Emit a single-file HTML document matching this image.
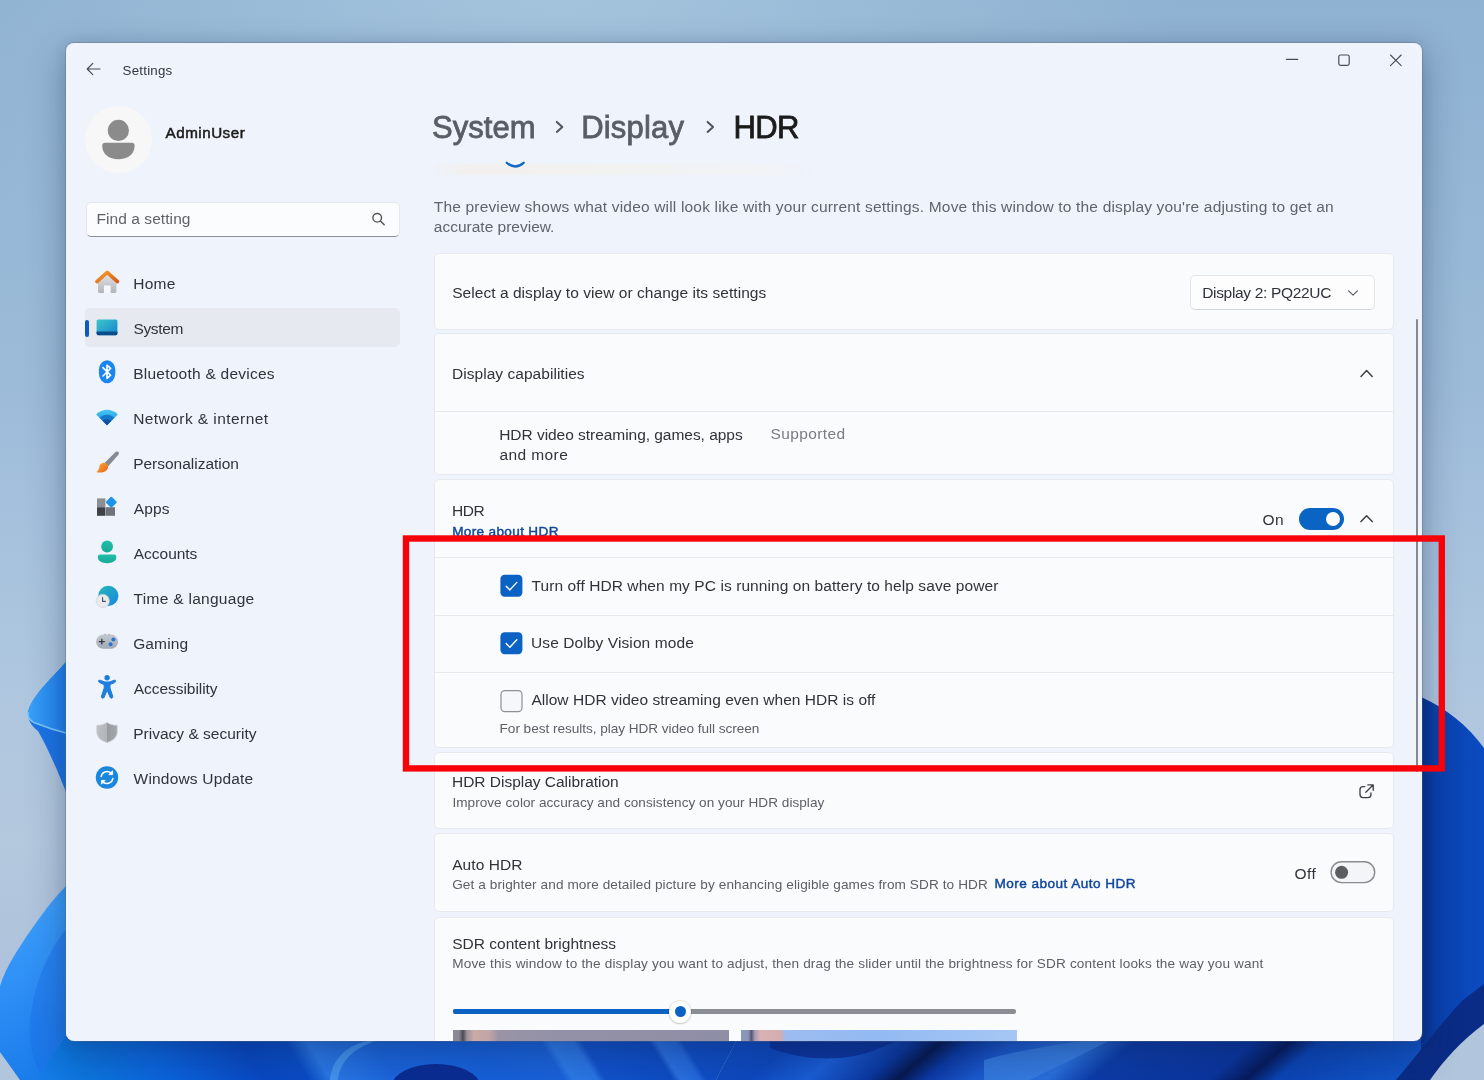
<!DOCTYPE html>
<html lang="en">
<head>
<meta charset="utf-8">
<title>Settings - HDR</title>
<style>
*{box-sizing:border-box;margin:0;padding:0}
html,body{width:1484px;height:1080px;overflow:hidden;background:#9dbbd8}
body{font-family:"Liberation Sans",sans-serif;color:#1b1b1b;position:relative}
.abs{position:absolute}
#wall{position:absolute;left:0;top:0;width:1484px;height:1080px}
#win{position:absolute;left:66px;top:43px;width:1356px;height:998px;background:#eff3fb;border-radius:8px;overflow:hidden}
#in{will-change:transform;position:absolute;left:-66px;top:-43px;width:1484px;height:1080px}
#shadow{position:absolute;left:66px;top:43px;width:1356px;height:998px;border-radius:8px;
 box-shadow:0 0 0 1px rgba(95,105,120,.36),0 14px 34px 6px rgba(15,35,75,.26),0 0 14px rgba(15,35,75,.12)}
.t{position:absolute;white-space:nowrap;font-size:15.5px;line-height:20px;color:#2b2e35}
.card{position:absolute;left:434px;width:960px;background:#fafbfd;border:1px solid #e7e9ee;border-radius:5px}
.hl{position:absolute;left:435px;width:958px;height:1px;background:#e7e9ee}
</style>
</head>
<body>
<svg id="wall" width="1484" height="1080" viewBox="0 0 1484 1080">
<defs>
 <linearGradient id="skyv" x1="0" y1="0" x2="0" y2="1">
  <stop offset="0" stop-color="#8fb2d2"/><stop offset=".35" stop-color="#9cbbd9"/><stop offset=".6" stop-color="#adc6df"/><stop offset=".78" stop-color="#b4c8de"/><stop offset="1" stop-color="#a9bfd9"/>
 </linearGradient>
 <radialGradient id="skyglow" cx="560" cy="-40" r="620" gradientUnits="userSpaceOnUse">
  <stop offset="0" stop-color="#a7c6de" stop-opacity=".9"/><stop offset="1" stop-color="#a7c6de" stop-opacity="0"/>
 </radialGradient>
 <linearGradient id="bot" x1="0" y1="0" x2="1484" y2="0" gradientUnits="userSpaceOnUse">
  <stop offset="0" stop-color="#1e80ee"/><stop offset=".05" stop-color="#0c76de"/><stop offset=".11" stop-color="#0b62dc"/><stop offset=".17" stop-color="#0848c2"/><stop offset=".2" stop-color="#0a4cc6"/>
  <stop offset=".215" stop-color="#2a78e6"/><stop offset=".235" stop-color="#2470e2"/><stop offset=".26" stop-color="#1a64dc"/><stop offset=".33" stop-color="#1660da"/><stop offset=".372" stop-color="#1a62da"/>
  <stop offset=".378" stop-color="#2c7ae8"/><stop offset=".394" stop-color="#2a74e4"/><stop offset=".4" stop-color="#1152cc"/><stop offset=".445" stop-color="#0e4cc4"/><stop offset=".45" stop-color="#2a70e0"/><stop offset=".463" stop-color="#2468dc"/>
  <stop offset=".468" stop-color="#0f4ec6"/><stop offset=".52" stop-color="#0d48be"/><stop offset=".56" stop-color="#1a5ed6"/><stop offset=".6" stop-color="#0b379f"/><stop offset=".62" stop-color="#06184f"/><stop offset=".64" stop-color="#0c3aa6"/>
  <stop offset=".67" stop-color="#1a58cc"/><stop offset=".72" stop-color="#2a70dc"/><stop offset=".75" stop-color="#0c3ca8"/><stop offset=".83" stop-color="#0a359e"/><stop offset=".855" stop-color="#061a5c"/><stop offset=".875" stop-color="#0b44b4"/><stop offset=".93" stop-color="#0f4fc2"/><stop offset=".97" stop-color="#1256c8"/><stop offset="1" stop-color="#0d4abc"/>
 </linearGradient>
 <linearGradient id="rp" x1="1421" y1="0" x2="1484" y2="0" gradientUnits="userSpaceOnUse">
  <stop offset="0" stop-color="#07328f"/><stop offset=".25" stop-color="#0a40ac"/><stop offset="1" stop-color="#0b4cc2"/>
 </linearGradient>
 <linearGradient id="lp2" x1="0" y1="930" x2="60" y2="1080" gradientUnits="userSpaceOnUse">
  <stop offset="0" stop-color="#3a9cfa"/><stop offset=".5" stop-color="#2a8af4"/><stop offset="1" stop-color="#177ae8"/>
 </linearGradient>
 <linearGradient id="lp1" x1="28" y1="0" x2="66" y2="0" gradientUnits="userSpaceOnUse">
  <stop offset="0" stop-color="#3aa2f8"/><stop offset="1" stop-color="#1f7fee"/>
 </linearGradient>
 <linearGradient id="lshade" x1="30" y1="0" x2="66" y2="0" gradientUnits="userSpaceOnUse">
  <stop offset="0" stop-color="#5f7fa8" stop-opacity="0"/><stop offset="1" stop-color="#4d6c96" stop-opacity=".55"/>
 </linearGradient>
<clipPath id="botclip"><path d="M66 1036 H1484 V1080 H36 Z"/></clipPath>
<clipPath id="botL"><path d="M0 1030 H742 L716 1080 H0 Z"/></clipPath><clipPath id="botR"><path d="M742 1030 H1484 V1080 H716 Z"/></clipPath>
</defs>
<rect width="1484" height="1080" fill="url(#skyv)"/>
<rect width="1484" height="700" fill="url(#skyglow)"/>
<!-- left petal 1 -->
<path d="M66 662 C50 680 32 696 28 712 C27 720 32 726 38 731 C48 748 58 772 66 792 Z" fill="#1c74e4"/>
<path d="M66 662 C50 680 32 696 28 712 C27 718 31 722 38 724 C48 728 58 731 66 733 Z" fill="url(#lp1)"/>
<path d="M28 712 C27 718 31 722 38 724 C48 728 58 731 66 733" fill="none" stroke="#7cc8fb" stroke-width="1.6"/>
<!-- left petal 2 -->
<path d="M66 886 C50 902 30 930 14 956 C8 966 3 976 0 986 L0 1080 L66 1080 Z" fill="url(#lp2)"/>
<path d="M66 930 C48 950 34 985 30 1020 C28 1045 34 1065 44 1080 L66 1080 Z" fill="#1a6ee6" opacity=".45"/>
<!-- bottom strip -->
<g clip-path="url(#botclip)"><g clip-path="url(#botL)"><rect x="-100" y="1020" width="1700" height="70" fill="url(#bot)" transform="translate(0,1060) skewX(32) translate(0,-1060)"/></g><g clip-path="url(#botR)"><rect x="-100" y="1020" width="1700" height="70" fill="url(#bot)" transform="translate(0,1060) skewX(-50) translate(0,-1060)"/></g></g>
<path d="M0 1052 L0 1080 L20 1080 Z" fill="#b1c5dc"/>
<ellipse cx="436" cy="1086" rx="44" ry="22" fill="#0a2c94"/>
<path d="M330 1080 C332 1058 348 1044 372 1040 L380 1040 C356 1046 340 1060 338 1080 Z" fill="#4a9af0" opacity=".8"/>
<path d="M770 1040 L900 1040 L870 1052 C840 1062 800 1060 770 1048 Z" fill="#0a2f96" opacity=".85"/>
<path d="M984 1080 L984 1060 C1020 1050 1060 1044 1090 1040 L1110 1040 C1080 1056 1050 1070 1030 1080 Z" fill="#3a80e2" opacity=".8"/>
<!-- right petal -->
<path d="M1421 697 C1446 708 1468 726 1484 748 L1484 1080 L1421 1080 Z" fill="url(#rp)"/>
<path d="M1396 1080 C1420 1052 1440 1024 1463 1000 L1484 984 L1484 1080 Z" fill="#0a2c86"/>
<path d="M1484 1024 C1462 1040 1444 1060 1430 1080 L1484 1080 Z" fill="#b1c6dc"/>
<!-- side shading near window -->
</svg>

<div id="shadow"></div>
<div id="win"><div id="in">
<svg class="abs" style="left:0;top:42px" width="1484" height="58" viewBox="0 42 1484 58" fill="none" stroke="#4a4d55" stroke-width="1.2" stroke-linecap="round" stroke-linejoin="round">
 <path d="M87.3 69 H100 M92.8 63.4 L87.2 69 L92.8 74.6"/>
 <path d="M1286.4 59.4 H1297.8" stroke-width="1.1"/>
 <rect x="1338.8" y="55" width="10.4" height="10.4" rx="1.8"/>
 <path d="M1390.5 55 L1401.2 65.6 M1401.2 55 L1390.5 65.6" stroke-width="1.1"/>
</svg>
<svg class="abs" style="left:80px;top:100px" width="80" height="80" viewBox="80 100 80 80">
 <circle cx="118.6" cy="139.6" r="33.5" fill="#f7f7f8"/>
 <circle cx="118.4" cy="130.4" r="10.6" fill="#8b8b8b"/>
 <path d="M105.2 142.8 H131.6 Q134.6 142.8 134.6 145.8 C134.6 154 128 159.3 118.4 159.3 C108.8 159.3 102.2 154 102.2 145.8 Q102.2 142.8 105.2 142.8 Z" fill="#8b8b8b"/>
</svg>
<div class="abs" style="left:85.5px;top:201.5px;width:314px;height:35px;background:#fbfcfe;border:1px solid #e3e6ec;border-bottom:1.5px solid #8b8f97;border-radius:5px"></div>
<svg class="abs" style="left:368px;top:208px" width="22" height="22" viewBox="368 208 22 22" fill="none" stroke="#4f535a" stroke-width="1.4" stroke-linecap="round">
 <circle cx="377.2" cy="217.8" r="4.3"/><path d="M380.4 221 L384.2 224.8"/>
</svg>
<div class="abs" style="left:85px;top:308px;width:315px;height:39px;background:#e6e9ef;border-radius:5px"></div>
<div class="abs" style="left:85px;top:319.5px;width:3.5px;height:17px;background:#0b5cbe;border-radius:2px"></div>

<svg class="abs" style="left:90px;top:262px" width="36" height="540" viewBox="90 262 36 540">
<defs>
 <linearGradient id="gHomeR" x1="0" y1="0" x2="1" y2="1"><stop offset="0" stop-color="#f5a12a"/><stop offset="1" stop-color="#d9591c"/></linearGradient>
 <linearGradient id="gHomeW" x1="0" y1="0" x2="0" y2="1"><stop offset="0" stop-color="#e3e4e6"/><stop offset="1" stop-color="#b3b5b9"/></linearGradient>
 <linearGradient id="gSys" x1="0" y1="0" x2="1" y2="1"><stop offset="0" stop-color="#3cc8c8"/><stop offset="1" stop-color="#1782d2"/></linearGradient>
 <linearGradient id="gWifi" x1="0" y1="0" x2="0" y2="1"><stop offset="0" stop-color="#45c6f4"/><stop offset="1" stop-color="#1b8fe0"/></linearGradient>
 <linearGradient id="gBrush" x1="0" y1="0" x2="1" y2="1"><stop offset="0" stop-color="#fbb03a"/><stop offset="1" stop-color="#e5601a"/></linearGradient>
 <linearGradient id="gAcc" x1="0" y1="0" x2="0" y2="1"><stop offset="0" stop-color="#25bfa9"/><stop offset="1" stop-color="#17a896"/></linearGradient>
 <linearGradient id="gGlobe" x1="0" y1="0" x2="1" y2="1"><stop offset="0" stop-color="#22b8b4"/><stop offset="1" stop-color="#1a86e6"/></linearGradient>
 <linearGradient id="gShield" x1="0" y1="0" x2="1" y2="0"><stop offset="0" stop-color="#bdc0c4"/><stop offset=".5" stop-color="#b0b3b7"/><stop offset=".5" stop-color="#979a9f"/><stop offset="1" stop-color="#a3a6ab"/></linearGradient>
 <linearGradient id="gPad" x1="0" y1="0" x2="0" y2="1"><stop offset="0" stop-color="#c3c8d0"/><stop offset="1" stop-color="#a4aab4"/></linearGradient>
</defs>
<!-- Home -->
<path d="M98 281 V291.4 Q98 292.9 99.5 292.9 H104 V286 H110.4 V292.9 H114.9 Q116.4 292.9 116.4 291.4 V281 L107.2 273.6 Z" fill="url(#gHomeW)"/>
<rect x="104" y="285.4" width="6.4" height="7.5" fill="#f4f7fc"/>
<path d="M96.9 281.6 L107.2 272.4 L117.5 281.6" fill="none" stroke="url(#gHomeR)" stroke-width="3.6" stroke-linecap="round" stroke-linejoin="round"/>
<!-- System -->
<rect x="96.6" y="319.4" width="20.8" height="15.8" rx="1.6" fill="url(#gSys)"/>
<path d="M96.6 331.4 H117.4 V333.6 Q117.4 335.2 115.8 335.2 H98.2 Q96.6 335.2 96.6 333.6 Z" fill="#0b4c88"/>
<!-- Bluetooth -->
<rect x="98.9" y="360.2" width="16.4" height="23" rx="8.2" ry="9.6" fill="#1b86f0"/>
<path d="M103 367.6 L110.6 375.2 L107 378.4 V365.2 L110.6 368.4 L103 376" fill="none" stroke="#fff" stroke-width="1.6" stroke-linejoin="round" stroke-linecap="round"/>
<!-- Network -->
<path d="M107 425.2 L96.2 414.4 C102.4 408.3 111.6 408.3 117.8 414.4 Z" fill="url(#gWifi)"/>
<path d="M107 425.2 L99.6 417.8 C103.8 413.8 110.2 413.8 114.4 417.8 Z" fill="#1679cc"/>
<path d="M107 425.2 L102.6 420.8 C105.2 418.6 108.8 418.6 111.4 420.8 Z" fill="#0d55a4"/>
<!-- Personalization -->
<path d="M115.8 451.8 L104 463.4 L107.6 467 L118.6 454.4 Q119.6 452.6 118.2 451.8 Q117 451 115.8 451.8 Z" fill="#868a92"/>
<path d="M104.2 462.8 C101 462.4 99.4 465 99.2 467.2 C99 469.6 97.6 471 96.4 472.2 C100.4 473 104.6 472.4 106.8 470 C108.8 467.8 108.4 464.6 106.6 463.4 Z" fill="url(#gBrush)"/>
<!-- Apps -->
<rect x="97" y="498.4" width="8.4" height="8.6" fill="#8b8e93"/>
<rect x="97" y="507.2" width="8.4" height="8.6" fill="#3e4248"/>
<rect x="105.8" y="507.2" width="9.2" height="8.6" fill="#70747a"/>
<rect x="107.2" y="498.1" width="8.2" height="8.2" rx="1" transform="rotate(45 111.3 502.2)" fill="#1c94ea"/>
<!-- Accounts -->
<circle cx="107.1" cy="546.5" r="5.9" fill="url(#gAcc)"/>
<path d="M100.2 554.6 H114 Q116.4 554.6 116.4 557 C116.4 561 112.4 563.2 107.1 563.2 C101.8 563.2 97.8 561 97.8 557 Q97.8 554.6 100.2 554.6 Z" fill="url(#gAcc)"/>
<!-- Time & language -->
<circle cx="108.3" cy="595.8" r="10.1" fill="url(#gGlobe)"/>
<circle cx="102.8" cy="600.9" r="6.6" fill="#e9eaee"/>
<circle cx="102.8" cy="600.9" r="6.6" fill="none" stroke="#c9ccd4" stroke-width=".6"/>
<path d="M102.6 597.6 V601.4 H105.4" fill="none" stroke="#4a4f5a" stroke-width="1.1" stroke-linecap="round" stroke-linejoin="round"/>
<!-- Gaming -->
<rect x="96.1" y="634.6" width="22" height="14.2" rx="7.1" fill="url(#gPad)"/>
<path d="M101.8 638.8 V644.6 M98.9 641.7 H104.7" stroke="#33373f" stroke-width="1.3" fill="none"/>
<circle cx="113.4" cy="639.4" r="2" fill="#2a72d6"/><circle cx="110.6" cy="644.2" r="2" fill="#2a72d6"/><rect x="104.4" y="633.8" width="1.6" height="1.4" rx=".6" fill="#a9afb8"/><rect x="108.2" y="633.8" width="1.6" height="1.4" rx=".6" fill="#a9afb8"/>
<!-- Accessibility -->
<circle cx="107.1" cy="677.8" r="2.7" fill="#1d7edc"/>
<path d="M98.6 681.4 Q98.2 680 99.8 680.2 L105 682 H109.2 L114.4 680.2 Q116 680 115.6 681.4 Q115.4 682.2 114.6 682.6 L110 684.6 V688 L112.8 696.4 Q113 697.8 111.8 698.2 Q110.6 698.4 110 697.2 L107.1 690.2 L104.2 697.2 Q103.6 698.4 102.4 698.2 Q101.2 697.8 101.4 696.4 L104.2 688 V684.6 L99.6 682.6 Q98.8 682.2 98.6 681.4 Z" fill="#1d7edc" stroke="#1d7edc" stroke-width="1" stroke-linejoin="round"/>
<!-- Privacy -->
<path d="M107 722.4 C110.2 724.6 113.6 725.4 117.2 725.4 V731.6 C117.2 737.2 113 740.8 107 742.6 C101 740.8 96.8 737.2 96.8 731.6 V725.4 C100.4 725.4 103.8 724.6 107 722.4 Z" fill="url(#gShield)" stroke="#c9cbcf" stroke-width=".7"/>
<!-- Windows Update -->
<circle cx="107" cy="777.5" r="11.2" fill="#1a86dc"/>
<path d="M101.2 776.4 A6 6 0 0 1 111.8 773.8 M112.8 778.6 A6 6 0 0 1 102.2 781.2" fill="none" stroke="#fff" stroke-width="1.6" stroke-linecap="round"/>
<path d="M112.6 770.8 V774.6 H108.8 Z M101.4 784.2 V780.4 H105.2 Z" fill="#fff" stroke="#fff" stroke-width=".8" stroke-linejoin="round"/>
</svg>

<!-- preview strip remnants -->
<div class="abs" style="opacity:.8;left:433px;top:164px;width:380px;height:10.5px;background:linear-gradient(90deg,rgba(245,241,236,0),#f3f0ec 8%,#f2f1ef 50%,#f1f2f4 85%,rgba(241,242,244,0));border-radius:2px"></div>
<svg class="abs" style="left:500px;top:155px" width="30" height="16" viewBox="500 155 30 16" fill="none" stroke="#1668c8" stroke-width="2.4" stroke-linecap="round"><path d="M506.8 162.8 Q515.2 170 523.6 162.8"/></svg>
<!-- breadcrumb chevrons -->
<svg class="abs" style="left:550px;top:115px" width="170" height="24" viewBox="550 115 170 24" fill="none" stroke="#4f535b" stroke-width="2" stroke-linecap="round" stroke-linejoin="round">
 <path d="M556.8 121.9 L562.3 126.9 L556.8 131.9"/><path d="M707.6 121.9 L713.1 126.9 L707.6 131.9"/>
</svg>
<!-- cards -->
<div class="card" style="top:253px;height:77px"></div>
<div class="card" style="top:333px;height:142px"></div>
<div class="hl" style="top:410.5px"></div>
<div class="card" style="top:479px;height:269px"></div>
<div class="hl" style="top:557px"></div>
<div class="hl" style="top:615px"></div>
<div class="hl" style="top:672px"></div>
<div class="card" style="top:752px;height:77px"></div>
<div class="card" style="top:833px;height:78.5px"></div>
<div class="card" style="top:916.5px;height:140px"></div>
<!-- dropdown -->
<div class="abs" style="left:1190px;top:275px;width:185px;height:35px;background:#fdfdfe;border:1px solid #e4e6eb;border-bottom-color:#d3d6dc;border-radius:5px"></div>
<svg class="abs" style="left:1340px;top:280px" width="80" height="260" viewBox="1340 280 80 260" fill="none" stroke="#3c4047" stroke-width="1.5" stroke-linecap="round" stroke-linejoin="round">
 <path d="M1348.6 290.8 L1353 295.2 L1357.4 290.8" stroke="#5a5e66" stroke-width="1.2"/>
 <path d="M1361 376.4 L1366.6 370.6 L1372.2 376.4"/>
 <path d="M1361 521.6 L1366.6 515.8 L1372.2 521.6"/>
</svg>
<!-- toggle on -->
<div class="abs" style="left:1298.8px;top:507.6px;width:45.4px;height:22px;border-radius:11px;background:#0a64c4"></div>
<div class="abs" style="left:1326px;top:511.6px;width:14px;height:14px;border-radius:50%;background:#fff"></div>
<!-- checkboxes -->
<svg class="abs" style="left:498px;top:570px" width="28" height="146" viewBox="498 570 28 146">
 <rect x="500.4" y="574.8" width="22" height="22" rx="4.2" fill="#0b62c4"/>
 <path d="M506.2 586.2 L509.9 589.9 L516.8 582.4" fill="none" stroke="#fff" stroke-width="1.4" stroke-linecap="round" stroke-linejoin="round"/>
 <rect x="500.4" y="632.2" width="22" height="22" rx="4.2" fill="#0b62c4"/>
 <path d="M506.2 643.6 L509.9 647.3 L516.8 639.8" fill="none" stroke="#fff" stroke-width="1.4" stroke-linecap="round" stroke-linejoin="round"/>
 <rect x="501" y="690.6" width="21" height="21" rx="3.8" fill="#f6f7f9" stroke="#8c9097" stroke-width="1.2"/>
</svg>
<!-- external link icon -->
<svg class="abs" style="left:1356px;top:781px" width="22" height="22" viewBox="1356 781 22 22" fill="none" stroke="#3c4047" stroke-width="1.35" stroke-linecap="round" stroke-linejoin="round">
 <path d="M1364.8 786.6 H1363 Q1360 786.6 1360 789.6 V794.6 Q1360 797.6 1363 797.6 H1368 Q1371 797.6 1371 794.6 V793"/>
 <path d="M1367.8 784.9 H1373.2 V790.3 M1373 785.1 L1365.8 792.3"/>
</svg>
<!-- toggle off -->
<svg class="abs" style="left:1326px;top:856px" width="54" height="32" viewBox="1326 856 54 32"><rect x="1331.1" y="861.8" width="43.6" height="20.8" rx="10.4" fill="#f4f5f7" stroke="#8b8c90" stroke-width="1.4"/><circle cx="1341.6" cy="872.3" r="6.5" fill="#5c5d61"/></svg>
<!-- slider -->
<div class="abs" style="left:453px;top:1009.4px;width:563px;height:4.4px;border-radius:2.2px;background:#8a8d92"></div>
<div class="abs" style="left:453px;top:1009.4px;width:228px;height:4.4px;border-radius:2.2px;background:#0b62c4"></div>
<div class="abs" style="left:669.2px;top:1000.6px;width:22px;height:22px;border-radius:50%;background:#fff;box-shadow:0 0 0 1px rgba(0,0,0,.08),0 1px 2px rgba(0,0,0,.15)"></div>
<div class="abs" style="left:674.6px;top:1006px;width:11.2px;height:11.2px;border-radius:50%;background:#0b62c4"></div>
<!-- preview images -->
<div class="abs" style="left:453px;top:1030px;width:276px;height:12px;background:linear-gradient(90deg,#8c8a9a 0,#8a8796 2.2%,#4e4752 3.6%,#9a8f98 5%,#c9aaa8 7.5%,#c2a5a6 13%,#9a94a6 16.5%,#9291a8 40%,#8e8ea6 100%)"></div>
<div class="abs" style="left:740.5px;top:1030px;width:276px;height:12px;background:linear-gradient(90deg,#8d98ba 0,#8a94b6 2.6%,#565676 3.8%,#a89ab0 5%,#d8b2b4 7%,#d4adb0 14.5%,#9cbcf0 16%,#93baf2 50%,#a6c7f5 100%)"></div>
<!-- scrollbar -->
<div class="abs" style="left:1416px;top:319px;width:2.2px;height:453px;background:#85888e;border-radius:1px"></div>

<div class="t" id="ttl" style="left:122.6px;top:61.2px;font-size:13.3px;letter-spacing:0.228px;color:#33373e">Settings</div>
<div class="t" id="usr" style="left:165.6px;top:122.7px;font-size:15.2px;letter-spacing:0.500px;color:#1a1a1a;-webkit-text-stroke:.5px #1a1a1a">AdminUser</div>
<div class="t" id="find" style="left:96.4px;top:209.1px;font-size:15.5px;letter-spacing:0.077px;color:#5f6368">Find a setting</div>
<div class="t" id="n0" style="left:133.2px;top:274.2px;font-size:15.5px;letter-spacing:0.267px;color:#30333a">Home</div>
<div class="t" id="n1" style="left:133.4px;top:319.3px;font-size:15.5px;letter-spacing:-0.320px;color:#30333a">System</div>
<div class="t" id="n2" style="left:133.2px;top:364.4px;font-size:15.5px;letter-spacing:0.244px;color:#30333a">Bluetooth &amp; devices</div>
<div class="t" id="n3" style="left:133.2px;top:408.5px;font-size:15.5px;letter-spacing:0.435px;color:#30333a">Network &amp; internet</div>
<div class="t" id="n4" style="left:133.2px;top:453.6px;font-size:15.5px;letter-spacing:-0.014px;color:#30333a">Personalization</div>
<div class="t" id="n5" style="left:133.8px;top:498.6px;font-size:15.5px;letter-spacing:0.134px;color:#30333a">Apps</div>
<div class="t" id="n6" style="left:133.8px;top:543.7px;font-size:15.5px;letter-spacing:-0.029px;color:#30333a">Accounts</div>
<div class="t" id="n7" style="left:133.6px;top:588.8px;font-size:15.5px;letter-spacing:0.286px;color:#30333a">Time &amp; language</div>
<div class="t" id="n8" style="left:133.2px;top:633.9px;font-size:15.5px;letter-spacing:0.120px;color:#30333a">Gaming</div>
<div class="t" id="n9" style="left:133.8px;top:679.0px;font-size:15.5px;letter-spacing:-0.050px;color:#30333a">Accessibility</div>
<div class="t" id="n10" style="left:133.2px;top:724.0px;font-size:15.5px;letter-spacing:0.012px;color:#30333a">Privacy &amp; security</div>
<div class="t" id="n11" style="left:133.6px;top:769.1px;font-size:15.5px;letter-spacing:0.184px;color:#30333a">Windows Update</div>
<div class="t" id="bc1" style="left:432.0px;top:118.1px;font-size:31px;letter-spacing:0.040px;color:#595d65;-webkit-text-stroke:.8px #595d65">System</div>
<div class="t" id="bc2" style="left:581.2px;top:118.1px;font-size:31px;letter-spacing:0.201px;color:#595d65;-webkit-text-stroke:.8px #595d65">Display</div>
<div class="t" id="bc3" style="left:733.6px;top:118.1px;font-size:31px;letter-spacing:-0.700px;color:#1b1b1b;-webkit-text-stroke:.8px #1b1b1b">HDR</div>
<div class="t" id="d1" style="left:433.8px;top:196.5px;font-size:15.5px;letter-spacing:0.174px;color:#60646b">The preview shows what video will look like with your current settings. Move this window to the display you're adjusting to get an</div>
<div class="t" id="d2" style="left:433.8px;top:216.8px;font-size:15.5px;letter-spacing:0.000px;color:#60646b">accurate preview.</div>
<div class="t" id="c1" style="left:452.2px;top:282.6px;font-size:15.5px;letter-spacing:0.048px;color:#30333a">Select a display to view or change its settings</div>
<div class="t" id="dd" style="left:1202.2px;top:283.4px;font-size:15.5px;letter-spacing:-0.324px;color:#30333a">Display 2: PQ22UC</div>
<div class="t" id="c2" style="left:452.0px;top:363.8px;font-size:15.5px;letter-spacing:0.042px;color:#30333a">Display capabilities</div>
<div class="t" id="c2a" style="left:499.2px;top:425.2px;font-size:15.5px;letter-spacing:-0.039px;color:#30333a">HDR video streaming, games, apps</div>
<div class="t" id="c2b" style="left:499.6px;top:445.3px;font-size:15.5px;letter-spacing:0.386px;color:#30333a">and more</div>
<div class="t" id="c2s" style="left:770.6px;top:424.4px;font-size:15.5px;letter-spacing:0.376px;color:#797c83">Supported</div>
<div class="t" id="c3" style="left:452.0px;top:500.9px;font-size:15.5px;letter-spacing:-0.500px;color:#30333a">HDR</div>
<div class="t" id="c3l" style="left:452.2px;top:522.3px;font-size:13.6px;letter-spacing:0.331px;color:#10479c;-webkit-text-stroke:.45px #10479c">More about HDR</div>
<div class="t" id="on" style="left:1262.4px;top:509.7px;font-size:15.5px;letter-spacing:0.600px;color:#30333a">On</div>
<div class="t" id="k1" style="left:531.6px;top:576.2px;font-size:15.5px;letter-spacing:0.079px;color:#30333a">Turn off HDR when my PC is running on battery to help save power</div>
<div class="t" id="k2" style="left:531.0px;top:632.5px;font-size:15.5px;letter-spacing:0.100px;color:#30333a">Use Dolby Vision mode</div>
<div class="t" id="k3" style="left:531.4px;top:689.9px;font-size:15.5px;letter-spacing:0.032px;color:#30333a">Allow HDR video streaming even when HDR is off</div>
<div class="t" id="k3s" style="left:499.6px;top:718.6px;font-size:13.6px;letter-spacing:-0.037px;color:#5c6067">For best results, play HDR video full screen</div>
<div class="t" id="c4" style="left:452.0px;top:772.0px;font-size:15.5px;letter-spacing:-0.018px;color:#30333a">HDR Display Calibration</div>
<div class="t" id="c4s" style="left:452.4px;top:793.3px;font-size:13.6px;letter-spacing:0.030px;color:#5c6067">Improve color accuracy and consistency on your HDR display</div>
<div class="t" id="c5" style="left:452.2px;top:854.9px;font-size:15.5px;letter-spacing:0.086px;color:#30333a">Auto HDR</div>
<div class="t" id="c5s" style="left:452.2px;top:874.9px;font-size:13.6px;letter-spacing:0.099px;color:#5c6067">Get a brighter and more detailed picture by enhancing eligible games from SDR to HDR</div>
<div class="t" id="c5l" style="left:994.6px;top:873.8px;font-size:13.6px;letter-spacing:0.444px;color:#10479c;-webkit-text-stroke:.45px #10479c">More about Auto HDR</div>
<div class="t" id="off" style="left:1294.4px;top:863.6px;font-size:15.5px;letter-spacing:0.500px;color:#30333a">Off</div>
<div class="t" id="c6" style="left:452.2px;top:934.4px;font-size:15.5px;letter-spacing:0.010px;color:#30333a">SDR content brightness</div>
<div class="t" id="c6s" style="left:452.2px;top:954.3px;font-size:13.6px;letter-spacing:0.152px;color:#5c6067">Move this window to the display you want to adjust, then drag the slider until the brightness for SDR content looks the way you want</div>
</div></div>
<svg class="abs" id="redbox" style="left:396px;top:528px" width="1056" height="252" viewBox="396 528 1056 252"><rect x="406" y="538.5" width="1035.8" height="229.9" fill="none" stroke="#f60208" stroke-width="6.4"/></svg>

</body>
</html>
